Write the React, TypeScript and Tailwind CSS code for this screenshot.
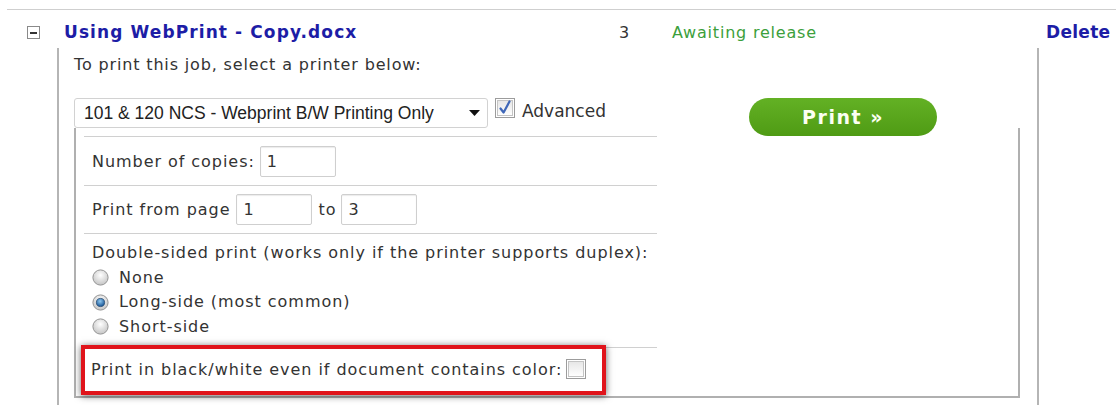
import React from "react";

const ui = { fontFamily: '"DejaVu Sans", Verdana, sans-serif' };
const arial = { fontFamily: '"Liberation Sans", Arial, sans-serif' };

function Radio({ checked }: { checked?: boolean }) {
  return (
    <svg width="17" height="17" viewBox="0 0 17 17" className="shrink-0">
      <defs>
        <radialGradient id={checked ? "rOn" : "rOff"} cx="50%" cy="35%" r="65%">
          <stop offset="0%" stopColor="#ffffff" />
          <stop offset="100%" stopColor="#c4c4c4" />
        </radialGradient>
        <radialGradient id="dot" cx="45%" cy="35%" r="60%">
          <stop offset="0%" stopColor="#8fc8f0" />
          <stop offset="100%" stopColor="#1f5c9a" />
        </radialGradient>
      </defs>
      <circle cx="8.5" cy="8.5" r="7.6" fill={`url(#${checked ? "rOn" : "rOff"})`} stroke="#949494" strokeWidth="1" />
      {checked && <circle cx="8.5" cy="8.5" r="4.1" fill="url(#dot)" stroke="#1d3f66" strokeWidth="0.7" />}
    </svg>
  );
}

function CheckBox({ checked }: { checked?: boolean }) {
  return (
    <svg width="20" height="20" viewBox="0 0 20 20" className="shrink-0">
      <defs>
        <linearGradient id={checked ? "cbOn" : "cbOff"} x1="0" y1="0" x2="0" y2="1">
          <stop offset="0%" stopColor="#e6e6e6" />
          <stop offset="100%" stopColor="#ffffff" />
        </linearGradient>
      </defs>
      <rect x="0.5" y="0.5" width="19" height="19" fill="#ffffff" stroke="#9c9c9c" />
      <rect x="2.5" y="2.5" width="15" height="15" fill={`url(#${checked ? "cbOn" : "cbOff"})`} stroke="#c4c4c4" />
      {checked && (
        <path d="M5.5 10.5 L8.6 14.5 L14.5 3.5" fill="none" stroke="#3f67b8" strokeWidth="2.2" strokeLinecap="round" strokeLinejoin="round" />
      )}
    </svg>
  );
}

function Field({ value, w }: { value: string; w: string }) {
  return (
    <div className={`${w} h-[31px] border border-[#cfcfcf] rounded-[2px] bg-white flex items-center pl-[6px] text-[#333] shadow-[inset_0_1px_1px_rgba(0,0,0,0.08)]`}>
      {value}
    </div>
  );
}

export default function App() {
  return (
    <div
      className="w-[1116px] h-[405px] bg-white overflow-hidden text-[16px] tracking-[0.95px] text-[#333]"
      style={ui}
    >
      {/* top rule */}
      <div className="ml-[7px] mt-[9px] border-t border-[#cfcfcf]" />

      {/* job header */}
      <div className="flex items-center h-[37px] mt-[1px] pt-[6px]">
        <div className="w-[64px] pl-[27px] flex items-center">
          <div className="w-[13px] h-[13px] border border-[#8a8a8a] flex items-center justify-center">
            <div className="w-[7px] h-[2px] bg-[#333]" />
          </div>
        </div>
        <div className="w-[555px] font-bold text-[#1d1da6] text-[17px] tracking-[1.1px]">Using WebPrint - Copy.docx</div>
        <div className="w-[53px] text-[#333]">3</div>
        <div className="w-[374px] text-[#3c9f3c] tracking-[0.8px]">Awaiting release</div>
        <div className="font-bold text-[#1d1da6] text-[17px] tracking-[0.3px]">Delete</div>
      </div>

      {/* job details */}
      <div className="ml-[57px] w-[982px] h-[400px] border-l-2 border-r-2 border-[#b5b5b5] pl-[15px]">
        <div className="pt-[5px] h-[50px] tracking-[0.85px]">To print this job, select a printer below:</div>

        <div className="flex items-start h-[30px]">
          <div className="w-[675px] flex items-center">
            <div
              className="w-[414px] h-[30px] border border-[#d2d2d2] rounded-[3px] flex items-center justify-between pl-[9px] pr-[7px] text-[17.5px] tracking-normal text-[#222]"
              style={arial}
            >
              <span>101 &amp; 120 NCS - Webprint B/W Printing Only</span>
              <svg width="11" height="6" viewBox="0 0 11 6">
                <path d="M0 0 H11 L5.5 6 Z" fill="#111" />
              </svg>
            </div>
            <div className="ml-[7px] -mt-[10px]">
              <CheckBox checked />
            </div>
            <span className="ml-[7px] -mt-[3px] text-[17px] tracking-normal">Advanced</span>
          </div>
          <div className="w-[188px] h-[38px] rounded-full bg-[#58a61b] bg-gradient-to-b from-[#63b124] to-[#4f9b14] flex items-center justify-center text-[#fbfff2] font-bold text-[19px] tracking-[1.5px]">
            Print »
          </div>
        </div>

        {/* advanced options */}
        <div className="w-[946px] h-[270px] border-l-2 border-r-2 border-b-2 border-[#b0b0b0] pt-[8px] pl-[8px]">
          <div className="w-[573px]">
            <div className="h-[49px] border-t border-[#d0d0d0] flex items-center pt-[1px]">
              <span className="ml-[8px] mr-[5px]">Number of copies:</span>
              <Field value="1" w="w-[76px]" />
            </div>
            <div className="h-[48px] border-t border-[#d0d0d0] flex items-center">
              <span className="ml-[8px] mr-[6px]">Print from page</span>
              <Field value="1" w="w-[76px]" />
              <span className="ml-[6px] mr-[5px]">to</span>
              <Field value="3" w="w-[76px]" />
            </div>
            <div className="h-[114px] border-t border-[#d0d0d0] pl-[8px] pt-[7px] leading-[24.5px]">
              <div>Double-sided print (works only if the printer supports duplex):</div>
              <div className="flex items-center gap-[10px]">
                <Radio />
                <span>None</span>
              </div>
              <div className="flex items-center gap-[10px]">
                <Radio checked />
                <span>Long-side (most common)</span>
              </div>
              <div className="flex items-center gap-[10px]">
                <Radio />
                <span>Short-side</span>
              </div>
            </div>
            <div className="border-t border-[#d0d0d0] h-[50px]">
              <div className="-ml-[3px] mt-[-3px] w-[525px] h-[50px] border-[4px] border-[#e0141b] shadow-[0_1px_7px_rgba(0,0,0,0.6)] flex items-center pl-[6px]">
                <span>Print in black/white even if document contains color:</span>
                <div className="ml-[4px] -mt-[2px]">
                  <CheckBox />
                </div>
              </div>
            </div>
          </div>
        </div>
      </div>
    </div>
  );
}
